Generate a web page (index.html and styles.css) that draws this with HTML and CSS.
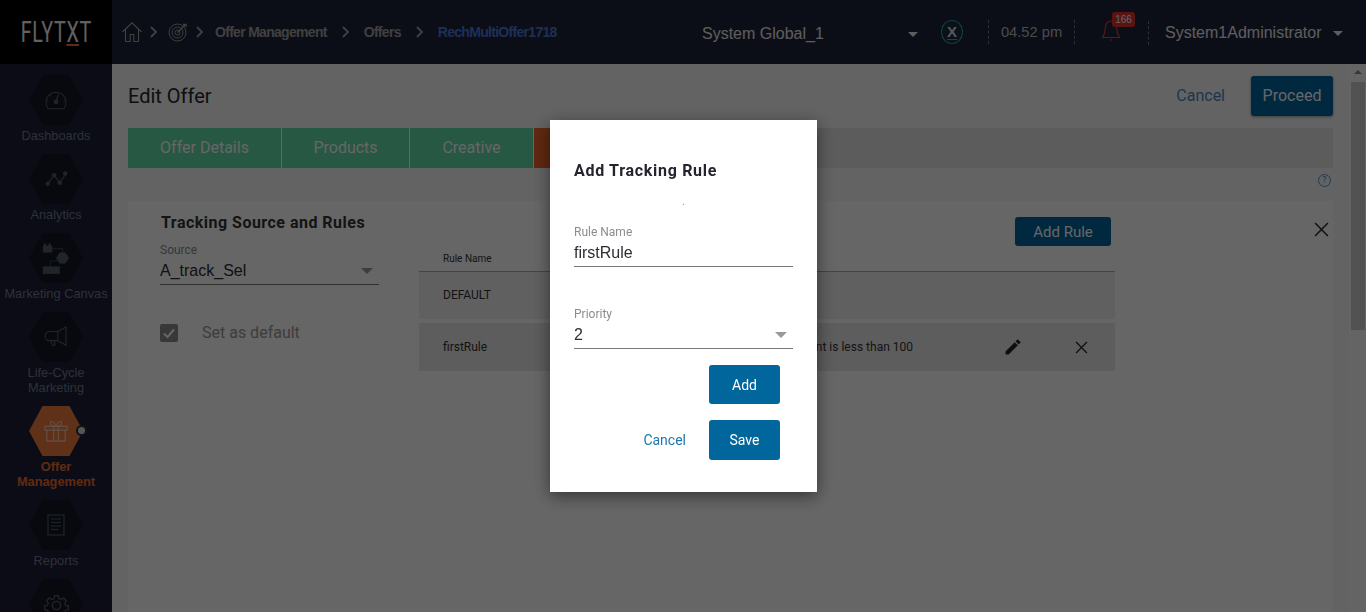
FILE: index.html
```html
<!DOCTYPE html>
<html lang="en">
<head>
<meta charset="utf-8">
<title>Edit Offer</title>
<link rel="stylesheet" href="styles.css">
</head>
<body>
<div class="app">
  <header class="topbar">
    <div class="logo"><span class="logo-text">FLYT<span class="logo-x">X</span>T</span></div>
    <nav class="crumbs">
      <svg class="ic-home" viewBox="0 0 20 20" fill="none" stroke="currentColor" stroke-width="1.1"><path d="M.5 10 10 .8l9.500 9.200M3.500 7.500v12h4.700v-7h3.600v7h4.700v-12"/></svg>
      <svg class="chev first" viewBox="0 0 8 12" fill="none" stroke="currentColor" stroke-width="1.8"><path d="m1 1 5 5-5 5"/></svg>
      <svg class="ic-target" viewBox="0 0 20 20" fill="none" stroke="currentColor" stroke-width="1"><circle cx="9.500" cy="10.500" r="8.500"/><circle cx="9.500" cy="10.500" r="5.500"/><circle cx="9.500" cy="10.500" r="2.500"/><path d="m9.500 10.500 8-8M15 2.500h3v2.500" stroke-width="1.300"/></svg>
      <svg class="chev first" viewBox="0 0 8 12" fill="none" stroke="currentColor" stroke-width="1.8"><path d="m1 1 5 5-5 5"/></svg>
      <span class="crumb c-offer">Offer Management</span>
      <svg class="chev" viewBox="0 0 8 12" fill="none" stroke="currentColor" stroke-width="1.8"><path d="m1 1 5 5-5 5"/></svg>
      <span class="crumb">Offers</span>
      <svg class="chev" viewBox="0 0 8 12" fill="none" stroke="currentColor" stroke-width="1.8"><path d="m1 1 5 5-5 5"/></svg>
      <span class="crumb current">RechMultiOffer1718</span>
    </nav>
    <div class="tenant"><span>System Global_1</span><i class="caret"></i></div>
    <div class="x-badge"><span>X</span></div>
    <div class="time">04.52 pm</div>
    <div class="bell">
      <svg viewBox="0 0 20 24" fill="none" stroke="currentColor" stroke-width="1.100"><path d="M1.500 19.500c1.800-2.500 2.500-5 2.700-9C4.500 6 6.500 3 10 3s5.500 3 5.800 7.500c.2 4 .9 6.500 2.700 9ZM10 21v2"/></svg>
      <span class="count">166</span>
    </div>
    <div class="user"><span>System1Administrator</span><i class="caret"></i></div>
  </header>
  <div class="body">
    <aside class="sidebar">
      <div class="nav-item">
        <div class="hex"><svg viewBox="0 0 26 24" fill="none" stroke="currentColor" stroke-width="1.100"><path d="M4.500 21.500a11 11 0 1 1 17 0Z"/><path d="m13 14 2.500-8" stroke-width="1.300"/><circle cx="13" cy="14" r="2" fill="currentColor"/><path d="M2.500 13h2M21.500 13h2M6 6.500l1.500 1.500"/></svg></div>
        <div class="nav-label">Dashboards</div>
      </div>
      <div class="nav-item">
        <div class="hex"><svg viewBox="0 0 26 20" fill="currentColor" stroke="currentColor" stroke-width="1.200"><path d="m4 15 7-9 6 8 7-10" fill="none"/><circle cx="4" cy="15" r="1.800"/><circle cx="11" cy="6" r="1.800"/><circle cx="17" cy="14" r="1.800"/><circle cx="23" cy="4" r="1.800"/></svg></div>
        <div class="nav-label">Analytics</div>
      </div>
      <div class="nav-item">
        <div class="hex hex-canvas"><svg viewBox="0 0 30 36" fill="currentColor"><path d="M1 5h10v7H1zM2 2.500h2.500V5H2zM7 2.500h2.500V5H7z"/><path d="M11 8h11v6M9 21v7" fill="none" stroke="currentColor" stroke-width=".7"/><path d="M9 21h10" fill="none" stroke="currentColor" stroke-width=".7"/><path d="m19 12 6 0 4 6-4 6h-6l-4-6z"/><path d="M1 27h18v8H1z"/></svg></div>
        <div class="nav-label">Marketing Canvas</div>
      </div>
      <div class="nav-item">
        <div class="hex"><svg viewBox="0 0 26 24" fill="none" stroke="currentColor" stroke-width="1.200"><path d="M15 6H6a5 5 0 0 0 0 10h9ZM15 6l9-5v20l-9-5M7 16l2 5h3l-1-5"/></svg></div>
        <div class="nav-label">Life-Cycle Marketing</div>
      </div>
      <div class="nav-item active">
        <div class="hex"><svg viewBox="0 0 26 24" fill="none" stroke="currentColor" stroke-width="1.200"><path d="M1 7h24v4H1zM3 11v12h20V11M10.500 7v16M15.500 7v16M13 7C9 7 6 5 7 2.500S12 3 13 7c1-4 5-7 6-4.500S17 7 13 7Z"/></svg><i class="dot"></i></div>
        <div class="nav-label">Offer Management</div>
      </div>
      <div class="nav-item">
        <div class="hex"><svg viewBox="0 0 18 22" fill="none" stroke="currentColor" stroke-width="1.200"><path d="M1 1h16v20H1zM4 5h10M4 8.500h10M4 12h10M4 15.500h7"/></svg></div>
        <div class="nav-label">Reports</div>
      </div>
      <div class="nav-item">
        <div class="hex hex-gear"><svg viewBox="0 0 24 24" fill="none" stroke="currentColor" stroke-width="1.300"><circle cx="12" cy="12" r="4"/><path d="M10 1.500h4l.6 3.200 2.400 1 2.700-1.800 2.800 2.800-1.800 2.700 1 2.400 3 .6v4l-3 .6-1 2.400 1.800 2.700-2.800 2.800-2.700-1.800-2.400 1-.6 3h-4l-.6-3-2.400-1-2.700 1.800-2.800-2.800 1.800-2.700-1-2.400-3-.6v-4l3-.6 1-2.400-1.800-2.700 2.800-2.800 2.700 1.800 2.400-1Z" transform="translate(1.200 1.200) scale(.9)"/></svg></div>
      </div>
    </aside>
    <main class="main">
      <div class="title-row">
        <h1 class="page-title">Edit Offer</h1>
        <a class="link-cancel">Cancel</a>
        <button class="btn btn-proceed">Proceed</button>
      </div>
      <div class="tabs">
        <div class="tab t1">Offer Details</div>
        <div class="tab t2">Products</div>
        <div class="tab t3">Creative</div>
        <div class="tab t4">Tracking</div>
      </div>
      <div class="help-row"><span class="help">?</span></div>
      <section class="panel">
        <div class="panel-left">
          <h2 class="panel-title">Tracking Source and Rules</h2>
          <div class="field source">
            <label class="field-label">Source</label>
            <div class="field-value">A_track_Sel<i class="caret grey"></i></div>
          </div>
          <div class="default-row">
            <span class="check"><svg viewBox="0 0 18 18" fill="none" stroke="#fff" stroke-width="2"><path d="m4 9.500 3.500 3.500L14 5.500"/></svg></span>
            <span class="default-text">Set as default</span>
          </div>
        </div>
        <div class="panel-right">
          <div class="add-rule-row"><button class="btn btn-add-rule">Add Rule</button></div>
          <div class="thead">Rule Name</div>
          <div class="row r1"><span class="cell-name">DEFAULT</span></div>
          <div class="row r2">
            <span class="cell-name">firstRule</span>
            <span class="cell-cond">Recharge amount is less than 100</span>
            <svg class="ic-edit" viewBox="0 0 24 24" fill="currentColor"><path d="M3 17.250V21h3.750L17.810 9.940l-3.750-3.750ZM20.710 7.040a1 1 0 0 0 0-1.410l-2.340-2.340a1 1 0 0 0-1.410 0l-1.830 1.830 3.750 3.750Z"/></svg>
            <svg class="ic-del" viewBox="0 0 12 12" fill="none" stroke="currentColor" stroke-width="1.200"><path d="m1 1 10 10M11 1 1 11"/></svg>
          </div>
        </div>
        <svg class="ic-close" viewBox="0 0 14 14" fill="none" stroke="currentColor" stroke-width="1.400"><path d="m1 1 12 12M13 1 1 13"/></svg>
      </section>
    </main>
    <div class="scrollbar"><i class="arrow"></i><div class="thumb"></div></div>
  </div>
</div>
<div class="overlay"></div>
<div class="modal">
  <h3 class="modal-title">Add Tracking Rule</h3>
  <div class="modal-dot">.</div>
  <div class="field m-name">
    <label class="field-label">Rule Name</label>
    <div class="field-value">firstRule</div>
  </div>
  <div class="field m-priority">
    <label class="field-label">Priority</label>
    <div class="field-value">2<i class="caret grey"></i></div>
  </div>
  <div class="m-actions m-add-row">
    <button class="btn m-btn m-add">Add</button>
  </div>
  <div class="m-actions m-save-row">
    <a class="m-cancel">Cancel</a>
    <button class="btn m-btn m-save">Save</button>
  </div>
</div>
</body>
</html>
```
FILE: styles.css
```css
* { box-sizing: border-box; }
html, body { margin: 0; height: 100%; overflow: hidden; }
body { font-family: Roboto, "Liberation Sans", sans-serif; color: #333; background: #fff; }
.app { height: 612px; display: flex; flex-direction: column; }

/* top bar */
.topbar { height: 64px; flex: none; display: flex; align-items: center; background: #20233a; color: #fff; font-family: "Liberation Sans", Arial, sans-serif; }
.logo { width: 112px; height: 64px; background: #000; display: flex; align-items: center; justify-content: center; flex: none; }
.logo-text { font-family: Roboto, sans-serif; font-weight: 400; font-size: 29px; line-height: 29px; letter-spacing: 1px; color: #f2f2f2; display: inline-block; transform: scaleX(.68); white-space: nowrap; }
.logo-x { display: inline-block; line-height: 24px; border-bottom: 2px solid #f0692c; }
.crumbs { display: flex; align-items: center; width: 560px; margin-left: 10px; color: #a0a0a0; flex: none; }
.ic-home { width: 20px; height: 20px; }
.ic-target { width: 20px; height: 20px; margin-left: 10px; }
.chev { width: 8px; height: 12px; margin-left: 15px; margin-right: 14px; }
.chev.first { margin: 0 0 0 8px; }
.c-offer { margin-left: 11px; }
.crumb { font-size: 14px; font-weight: 700; letter-spacing: -.7px; color: #a0a0a0; white-space: nowrap; }
.crumb.current { color: #4878d8; }
.tenant { width: 216px; margin-left: 20px; display: flex; justify-content: space-between; align-items: center; font-size: 16px; color: #e8e8e8; flex: none; padding-top: 4px; }
.caret { display: inline-block; width: 0; height: 0; border: 5px solid transparent; border-top: 5px solid #e8e8e8; border-bottom: 0; }
.x-badge { width: 22px; height: 24px; margin-left: 23px; border-radius: 50%; border: 1px solid #2aa0a0; background: #1b2b3c; display: flex; align-items: center; justify-content: center; font: 700 15px "Liberation Sans", sans-serif; color: #ddd; flex: none; }
.x-badge span { line-height: 14px; border-bottom: 1px solid #f0692c; }
.time { margin-left: 25px; width: 87px; height: 24px; line-height: 24px; text-align: center; border-left: 1px dashed #777; border-right: 1px dashed #777; font-size: 14.700px; color: #bbb; flex: none; }
.bell { position: relative; width: 73px; height: 30px; color: #f03a3a; flex: none; }
.bell svg { position: absolute; left: 26px; top: 1px; width: 20px; height: 24px; }
.count { position: absolute; left: 37px; top: -5px; width: 23px; height: 15px; background: #e03030; border-radius: 3px; color: #fff; font-size: 10px; line-height: 15px; text-align: center; }
.user { height: 24px; margin-top: 2px; border-left: 1px dashed #777; padding-left: 16px; display: flex; align-items: center; gap: 11px; font-size: 16px; color: #e8e8e8; white-space: nowrap; }

/* layout */
.body { flex: 1; min-height: 0; display: flex; }
.sidebar { width: 112px; flex: none; background: #1c2037; padding-top: 11px; overflow: hidden; }
.nav-item { display: flex; flex-direction: column; align-items: center; margin-bottom: 11px; color: #6e7a8c; }
.hex { position: relative; width: 54px; height: 50px; color: #4e5c64; display: flex; align-items: center; justify-content: center; }
.hex::before { content: ""; position: absolute; inset: 0; background: #161826; clip-path: polygon(25% 0, 75% 0, 100% 50%, 75% 100%, 25% 100%, 0 50%); }
.hex svg { position: relative; width: 24px; height: 22px; }
.hex-canvas svg { width: 28px; height: 36px; }
.hex-gear svg { width: 25px; height: 25px; margin-top: 2px; }
.nav-label { margin-top: 3px; font-size: 12.800px; line-height: 15px; text-align: center; font-family: "Liberation Sans", sans-serif; width: 112px; padding: 0 2px; white-space: normal; }
.nav-item:nth-child(3) .nav-label { padding: 0; white-space: nowrap; }
.nav-item:nth-child(4) .nav-label { padding: 0 20px; }
.nav-item.active { color: #f26a2c; }
.nav-item.active .nav-label { font-weight: 700; padding: 0 10px; }
.nav-item.active .hex::before { background: #ee7a3e; }
.nav-item.active .hex { color: #f2cbb0; }
.dot { position: absolute; right: -4px; top: 19px; width: 11px; height: 11px; border-radius: 50%; background: #d8d8d8; border: 2.500px solid #2c2f40; }

.main { flex: 1; min-width: 0; padding: 12px 16px 0 16px; background: #f8f8f8; color: #333; }
.title-row { display: flex; align-items: center; height: 40px; }
.page-title { flex: 1; margin: 0; font-size: 20px; font-weight: 400; color: #262626; }
.link-cancel { font-size: 16px; color: #4a86bf; margin: 0 26px 2px 0; }
.btn { border: 0; padding: 0; font-family: Roboto, "Liberation Sans", sans-serif; color: #fff; background: #0066a0; border-radius: 3px; }
.btn-proceed { width: 82px; height: 40px; padding-bottom: 2px; font-size: 16px; box-shadow: 0 1px 3px rgba(0,0,0,.4); }

.tabs { display: flex; height: 40px; margin-top: 12px; background: #e6e6e6; }
.tab { display: flex; align-items: center; justify-content: center; padding-bottom: 2px; font-size: 16px; color: #fff; background: #5fdba8; }
.t1 { width: 154px; border-right: 1px solid #fff; }
.t2 { width: 128px; border-right: 1px solid #fff; }
.t3 { width: 124px; border-right: 1px solid #fff; }
.t4 { width: 120px; background: #f0662c; }
.help-row { height: 33px; display: flex; justify-content: flex-end; align-items: flex-start; padding: 6px 2px 0 0; }
.help { width: 13px; height: 13px; border-radius: 50%; border: 1px solid #5a90c0; color: #5a90c0; font-size: 9px; line-height: 11px; text-align: center; }

.panel { position: relative; display: flex; background: #fff; min-height: 420px; }
.panel-left { width: 291px; padding: 12px 0 0 33px; flex: none; }
.panel-title { margin: 0; font-size: 16px; line-height: 19px; font-weight: 700; letter-spacing: .48px; color: #333; white-space: nowrap; }
.field { position: relative; }
.field-label { display: block; font-size: 12px; line-height: 14px; color: #8a8a8a; }
.field-value { position: relative; font-family: "Liberation Sans", sans-serif; font-size: 16px; line-height: 19px; height: 28px; padding-top: 4px; border-bottom: 1px solid #777; color: #2d2d33; }
.field-value .caret { position: absolute; right: 6px; top: 11px; }
.caret.grey { border-top-color: #999; border-width: 6px; border-top-width: 6px; border-bottom: 0; }
.source { margin: 11px 0 0 -1px; width: 219px; }
.default-row { display: flex; align-items: center; margin: 38px 0 0 -1px; height: 20px; font-size: 16px; color: #999; }
.default-text { margin-top: -2px; }
.check { width: 18px; height: 18px; background: #8c8c8c; border-radius: 2px; margin-right: 24px; display: flex; }
.check svg { width: 18px; height: 18px; }

.panel-right { width: 696px; flex: none; }
.add-rule-row { display: flex; justify-content: flex-end; padding: 16px 4px 0 0; height: 45px; }
.btn-add-rule { width: 96px; height: 29px; font-size: 15px; }
.thead { height: 26px; padding: 7px 0 0 24px; font-size: 10px; line-height: 12px; color: #333; border-bottom: 1px solid #aaa; }
.row { display: flex; align-items: center; font-size: 12px; color: #333; padding-left: 24px; }
.r1 { height: 47px; margin-bottom: 4px; background: #f0f0f0; padding-bottom: 1px; }
.r2 { height: 48px; background: #e8e8e8; }
.cell-name { width: 200px; flex: none; }
.cell-cond { width: 270px; flex: none; text-align: right; white-space: nowrap; }
.ic-edit { width: 20px; height: 20px; margin-left: 90px; color: #262626; flex: none; }
.ic-del { width: 13px; height: 13px; margin-left: 52px; color: #262626; flex: none; }
.ic-close { position: absolute; right: 4px; top: 21px; width: 15px; height: 15px; color: #262626; }

.scrollbar { width: 16px; flex: none; background: #fafafa; padding: 6px 1px 0; margin-left: 1px; }
.arrow { display: block; width: 0; height: 0; margin: 0 auto; border: 4px solid transparent; border-bottom: 4px solid #888; border-top: 0; }
.thumb { margin-top: 8px; height: 248px; background: #cdcdcd; }

/* overlay + modal */
.overlay { position: fixed; inset: 0; background: rgba(0,0,0,.6); }
.modal { position: fixed; left: 550px; top: 120px; width: 267px; height: 372px; background: #fff; padding: 41px 24px 0; box-shadow: 0 4px 16px rgba(0,0,0,.5); }
.modal-title { margin: 0; font: 700 16px/19px Roboto, sans-serif; letter-spacing: .7px; color: #24242e; }
.modal-dot { height: 43px; line-height: 16px; padding-top: 14px; text-align: center; font-size: 10px; color: #888; }
.m-name { margin-top: 2px; }
.m-priority { margin-top: 40px; }
.m-name .field-label, .m-priority .field-label { color: #8c8c8c; }
.m-actions { display: flex; justify-content: flex-end; align-items: center; padding-right: 13px; }
.m-add-row { margin-top: 16px; }
.m-btn { width: 71px; height: 40px; font-size: 14px; font-weight: 400; background: #00669c; }
.m-add { height: 39px; }
.m-save-row { margin-top: 16px; }
.m-cancel { font-size: 14px; color: #1b77ad; margin-right: 23px; }
```
